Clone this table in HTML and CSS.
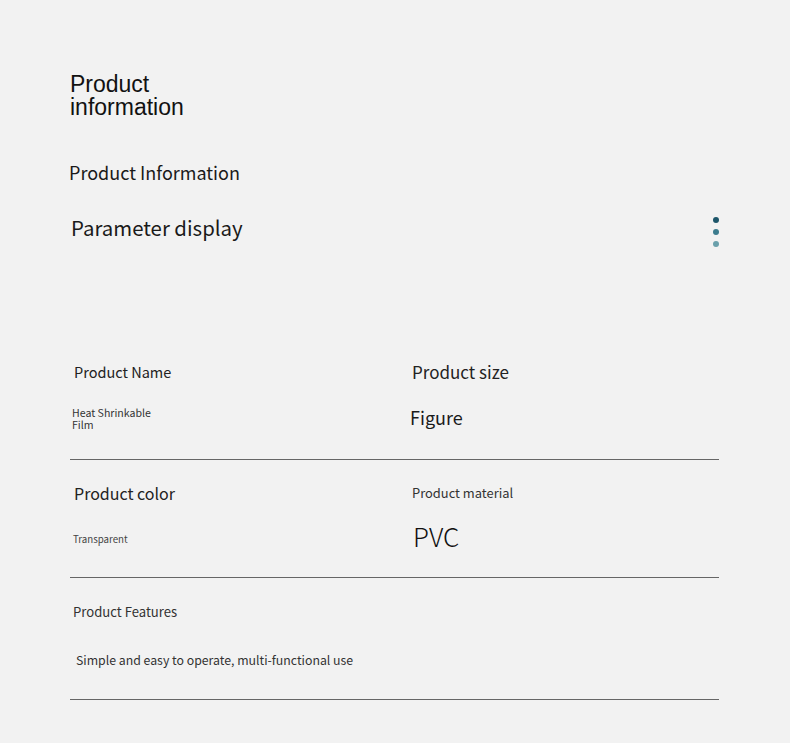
FILE: index.html
```html
<!DOCTYPE html>
<html lang="en">
<head>
    <meta charset="UTF-8">
    <meta name="viewport" content="width=device-width, initial-scale=1.0">
    <title>Product information</title>
    <link rel="stylesheet" href="styles.css">
</head>
<body>
    <div class="page">
        <h1 class="title">Product<br>information</h1>
        <p class="subtitle">Product Information</p>

        <div class="param-head">
            <h2>Parameter display</h2>
            <div class="dots">
                <span class="dot dot-1"></span>
                <span class="dot dot-2"></span>
                <span class="dot dot-3"></span>
            </div>
        </div>

        <div class="params">
            <div class="param-row row-1">
                <div class="cell">
                    <div class="label name-label">Product Name</div>
                    <div class="value"><span class="name-value">Heat Shrinkable<br>Film</span></div>
                </div>
                <div class="cell">
                    <div class="label size-label">Product size</div>
                    <div class="value"><span class="size-value">Figure</span></div>
                </div>
            </div>

            <div class="param-row row-2">
                <div class="cell">
                    <div class="label color-label">Product color</div>
                    <div class="value"><span class="color-value">Transparent</span></div>
                </div>
                <div class="cell">
                    <div class="label material-label">Product material</div>
                    <div class="value"><span class="material-value">PVC</span></div>
                </div>
            </div>

            <div class="param-row row-3">
                <div class="cell wide">
                    <div class="label features-label">Product Features</div>
                    <div class="value"><span class="features-value">Simple and easy to operate, multi-functional use</span></div>
                </div>
            </div>
        </div>
    </div>
</body>
</html>
```

FILE: styles.css
```css
body {
    margin: 0;
    background: #f2f2f2;
    font-family: "Noto Sans CJK SC", "Noto Sans", sans-serif;
    color: #222;
}

.page {
    width: 649px;
    margin-left: 70px;
    padding-top: 73px;
    padding-bottom: 44px;
}

.title {
    margin: 0;
    font-family: "Liberation Sans", Arial, sans-serif;
    font-size: 23px;
    line-height: 23px;
    font-weight: 400;
    color: #111;
}

.subtitle {
    margin: 38px 0 0 -1px;
    font-size: 18px;
    line-height: 30px;
    color: #1a1a1a;
}

.param-head {
    display: flex;
    justify-content: space-between;
    align-items: flex-start;
    margin-top: 25px;
}

.param-head h2 {
    margin: 0 0 0 1px;
    font-size: 20.4px;
    line-height: 30px;
    font-weight: 400;
    color: #1a1a1a;
}

.dots {
    display: flex;
    flex-direction: column;
    gap: 6px;
    margin-top: 5px;
}

.dot {
    width: 6px;
    height: 6px;
    border-radius: 50%;
}

.dot-1 { background: #1d566a; }
.dot-2 { background: #3c7c8e; }
.dot-3 { background: #6aa0ab; }

.params {
    margin-top: 110px;
}

.param-row {
    display: grid;
    grid-template-columns: 340px 1fr;
    border-bottom: 1px solid #666;
}

.row-1 { padding: 0 0 22px; }
.row-2 { padding: 18px 0 18px; }
.row-3 { padding: 19px 0 19px; }

.cell.wide {
    grid-column: 1 / 3;
}

.label {
    height: 30px;
    line-height: 30px;
    white-space: nowrap;
}

.value {
    height: 40px;
    display: flex;
    align-items: center;
}

.row-1 .value { margin-top: 10px; }
.row-2 .value { margin-top: 11px; }
.row-3 .value { margin-top: 13px; }

.name-label { font-size: 14.5px; padding-left: 4px; }
.name-value {
    font-size: 10.6px;
    line-height: 12px;
    padding-left: 2px;
    margin-top: 4px;
    color: #333;
}

.size-label { font-size: 17px; padding-left: 2px; }
.size-value { font-size: 18px; color: #1a1a1a; }

.color-label { font-size: 16px; padding-left: 4px; }
.color-value { font-size: 9.7px; padding-left: 3px; color: #444; }

.material-label { font-size: 12.9px; padding-left: 2px; color: #333; }
.material-value {
    font-size: 26px;
    font-weight: 200;
    padding-left: 3px;
    margin-top: -7px;
    color: #111;
}

.features-label { font-size: 13.1px; padding-left: 3px; color: #333; }
.features-value { font-size: 12.3px; padding-left: 6px; color: #333; }
```
